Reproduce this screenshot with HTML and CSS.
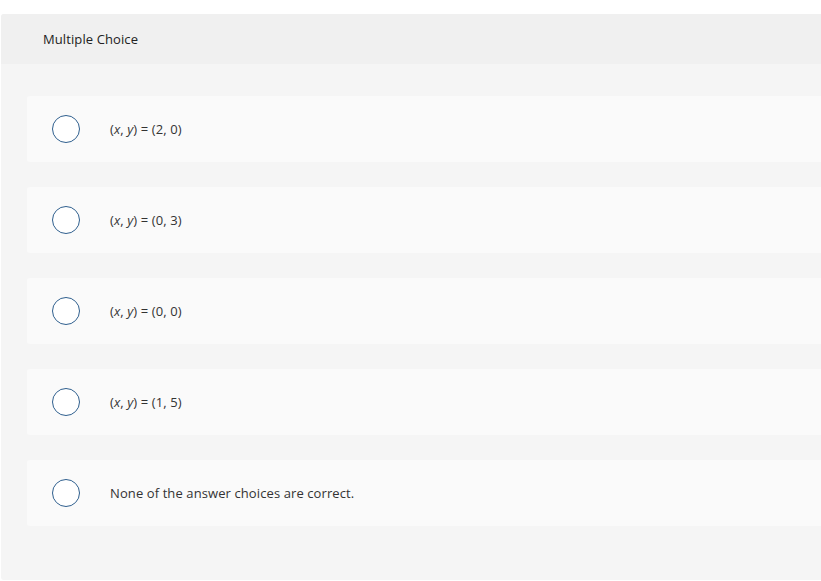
FILE: index.html
```html
<!DOCTYPE html>
<html>
<head>
<meta charset="utf-8">
<link rel="stylesheet" href="styles.css">
</head>
<body>
<div class="question">
  <div class="question-header">Multiple Choice</div>
  <div class="choices">
    <div class="choice"><span class="radio"></span><span class="label">(<i>x</i>, <i>y</i>) = (2, 0)</span></div>
    <div class="choice"><span class="radio"></span><span class="label">(<i>x</i>, <i>y</i>) = (0, 3)</span></div>
    <div class="choice"><span class="radio"></span><span class="label">(<i>x</i>, <i>y</i>) = (0, 0)</span></div>
    <div class="choice"><span class="radio"></span><span class="label">(<i>x</i>, <i>y</i>) = (1, 5)</span></div>
    <div class="choice"><span class="radio"></span><span class="label">None of the answer choices are correct.</span></div>
  </div>
</div>
</body>
</html>
```
FILE: styles.css
```css
html, body {
  margin: 0;
  padding: 0;
  background: #ffffff;
}
body {
  font-family: "Open Sans", Lato, sans-serif;
  color: #333333;
  letter-spacing: 0.1px;
}
.question {
  margin: 14px 0 0 1px;
  height: 566px;
  background: #f5f5f5;
  border-radius: 3px 0 0 3px;
  overflow: hidden;
}
.question-header {
  height: 50px;
  background: #f0f0f0;
  display: flex;
  align-items: center;
  padding-left: 42px;
  font-size: 13px;
  color: #222;
}
.choices {
  display: flex;
  flex-direction: column;
  gap: 25px;
  padding: 32px 0 0 26px;
}
.choice {
  height: 66px;
  background: #fafafa;
  border-radius: 3px 0 0 3px;
  display: flex;
  align-items: center;
  padding-left: 25px;
}
.radio {
  box-sizing: border-box;
  width: 28px;
  height: 28px;
  border: 1.5px solid #2f5f8e;
  border-radius: 50%;
  background: #fff;
  flex: none;
}
.label {
  margin-left: 30px;
  font-size: 13px;
  color: #333;
}
```
